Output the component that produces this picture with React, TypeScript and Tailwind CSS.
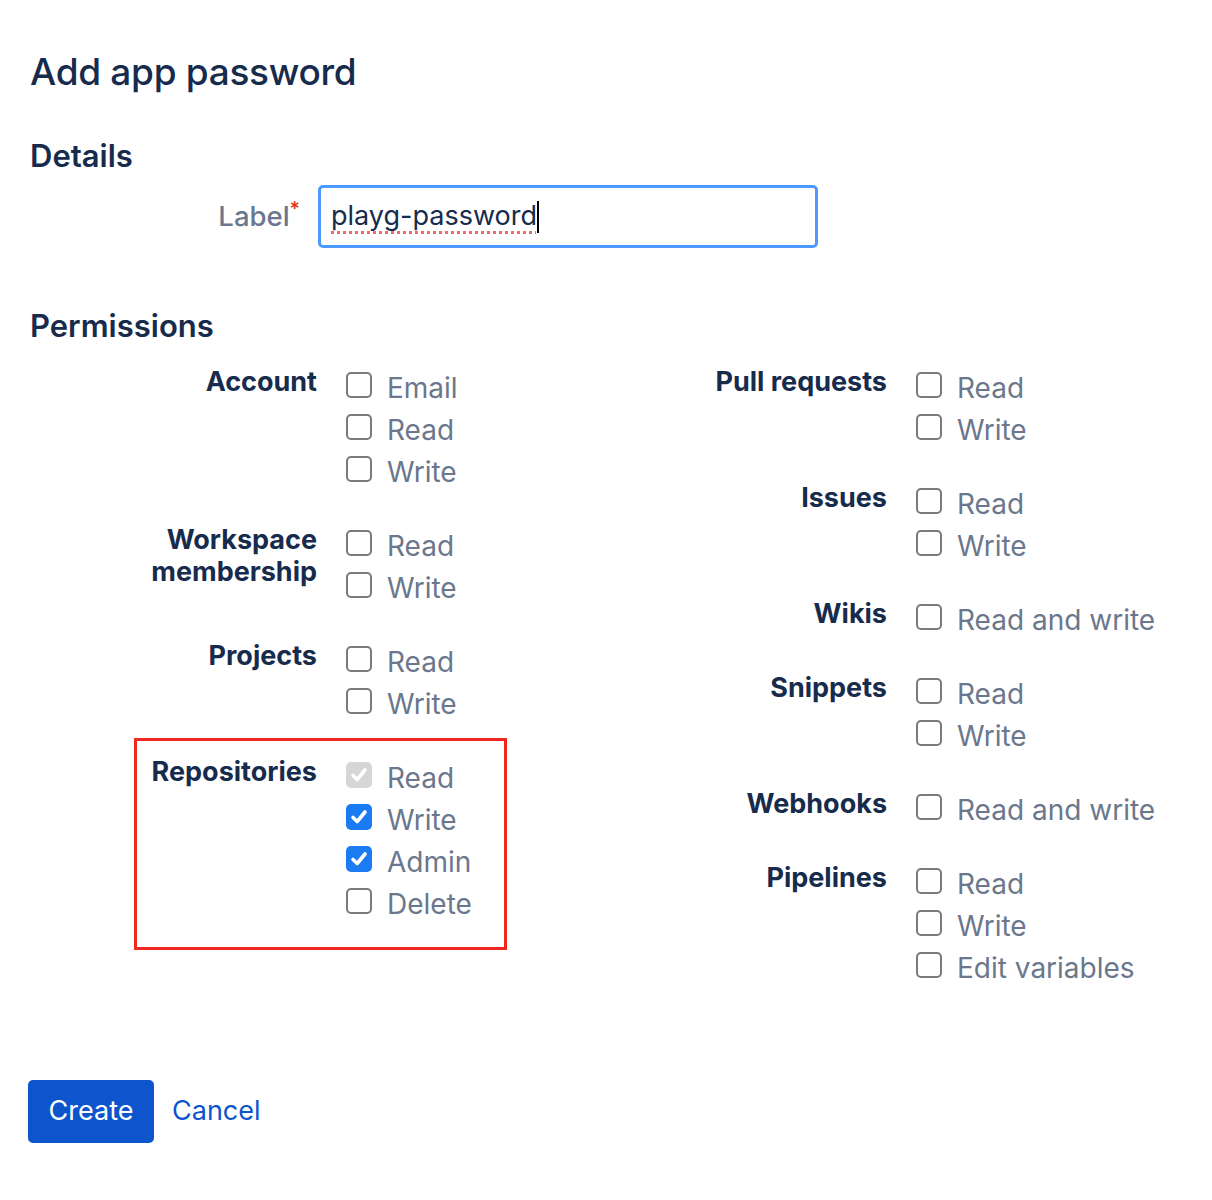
import React from "react";

type Opt = { label: string; state?: "off" | "on" | "disabled" };
type Group = { title: string[]; options: Opt[] };

const left: Group[] = [
  { title: ["Account"], options: [{ label: "Email" }, { label: "Read" }, { label: "Write" }] },
  { title: ["Workspace", "membership"], options: [{ label: "Read" }, { label: "Write" }] },
  { title: ["Projects"], options: [{ label: "Read" }, { label: "Write" }] },
];

const repo: Group = {
  title: ["Repositories"],
  options: [
    { label: "Read", state: "disabled" },
    { label: "Write", state: "on" },
    { label: "Admin", state: "on" },
    { label: "Delete" },
  ],
};

const right: Group[] = [
  { title: ["Pull requests"], options: [{ label: "Read" }, { label: "Write" }] },
  { title: ["Issues"], options: [{ label: "Read" }, { label: "Write" }] },
  { title: ["Wikis"], options: [{ label: "Read and write" }] },
  { title: ["Snippets"], options: [{ label: "Read" }, { label: "Write" }] },
  { title: ["Webhooks"], options: [{ label: "Read and write" }] },
  { title: ["Pipelines"], options: [{ label: "Read" }, { label: "Write" }, { label: "Edit variables" }] },
];

function Check() {
  return (
    <svg viewBox="0 0 26 26" className="w-[26px] h-[26px]">
      <path d="M7 13.5 L11.2 17.5 L19 8" fill="none" stroke="white" strokeWidth="3.6" strokeLinecap="round" strokeLinejoin="round" />
    </svg>
  );
}

function Box({ state = "off" }: { state?: Opt["state"] }) {
  if (state === "on")
    return (
      <span className="w-[26px] h-[26px] rounded-[5px] bg-[#1A7BF3] flex items-center justify-center shrink-0">
        <Check />
      </span>
    );
  if (state === "disabled")
    return (
      <span className="w-[26px] h-[26px] rounded-[5px] bg-[#D6D6D6] flex items-center justify-center shrink-0">
        <Check />
      </span>
    );
  return <span className="w-[26px] h-[26px] rounded-[5px] border-2 border-[#7A7A7A] bg-white shrink-0" />;
}

function GroupRow({ g }: { g: Group }) {
  return (
    <div className="flex">
      <div className="w-[287px] text-right text-[27px] font-bold leading-[32px] text-[#172B4D] pt-[2px]">
        {g.title.map((t) => (
          <div key={t}>{t}</div>
        ))}
      </div>
      <div className="flex flex-col pl-[29px]">
        {g.options.map((o) => (
          <div key={o.label} className="h-[42px] flex items-center gap-[15px]">
            <Box state={o.state} />
            <span className="text-[28px] text-[#6B778C] leading-none pt-[5px]">{o.label}</span>
          </div>
        ))}
      </div>
    </div>
  );
}

export default function App() {
  return (
    <div className="bg-white min-h-[1200px] w-[1212px] pl-[30px] pt-[46px] font-['Inter',sans-serif] text-[#172B4D]">
      <h1 className="text-[37px] font-medium leading-[52px] tracking-[-0.3px]">Add app password</h1>

      <h2 className="mt-[40px] text-[31px] font-semibold leading-[36px]">Details</h2>
      <div className="flex items-center mt-[11px]">
        <div className="w-[270px] text-right text-[27.5px] font-medium text-[#6B778C]">
          Label<span className="text-[#DE350B] align-top text-[20px] relative -top-[2px]">*</span>
        </div>
        <div className="ml-[18px] w-[500px] h-[63px] border-[3px] border-[#4C9AFF] rounded-[5px] flex items-center px-[10px]">
          <span className="text-[27px] text-[#172B4D] underline decoration-dotted decoration-[#F26B6B] decoration-[3px] underline-offset-[6px]">
            playg-password
          </span>
          <span className="w-[2px] h-[32px] bg-black" />
        </div>
      </div>

      <h2 className="mt-[60px] text-[31px] font-semibold leading-[36px]">Permissions</h2>

      <div className="flex mt-[20px]">
        <div className="w-[570px] flex flex-col gap-[32px]">
          {left.map((g) => (
            <GroupRow key={g.title.join()} g={g} />
          ))}
          <div className="relative">
            <GroupRow g={repo} />
            <div className="absolute left-[104px] top-[-16px] w-[373px] h-[212px] border-[3px] border-[#F0281E] pointer-events-none" />
          </div>
        </div>
        <div className="w-[570px] flex flex-col gap-[32px]">
          {right.map((g) => (
            <GroupRow key={g.title.join()} g={g} />
          ))}
        </div>
      </div>

      <div className="flex items-center mt-[94px] gap-[18px] -ml-[2px]">
        <button className="h-[63px] w-[126px] rounded-[5px] bg-[#0C55CD] text-white text-[27px]">Create</button>
        <span className="text-[27px] text-[#0C55CD]">Cancel</span>
      </div>
    </div>
  );
}
